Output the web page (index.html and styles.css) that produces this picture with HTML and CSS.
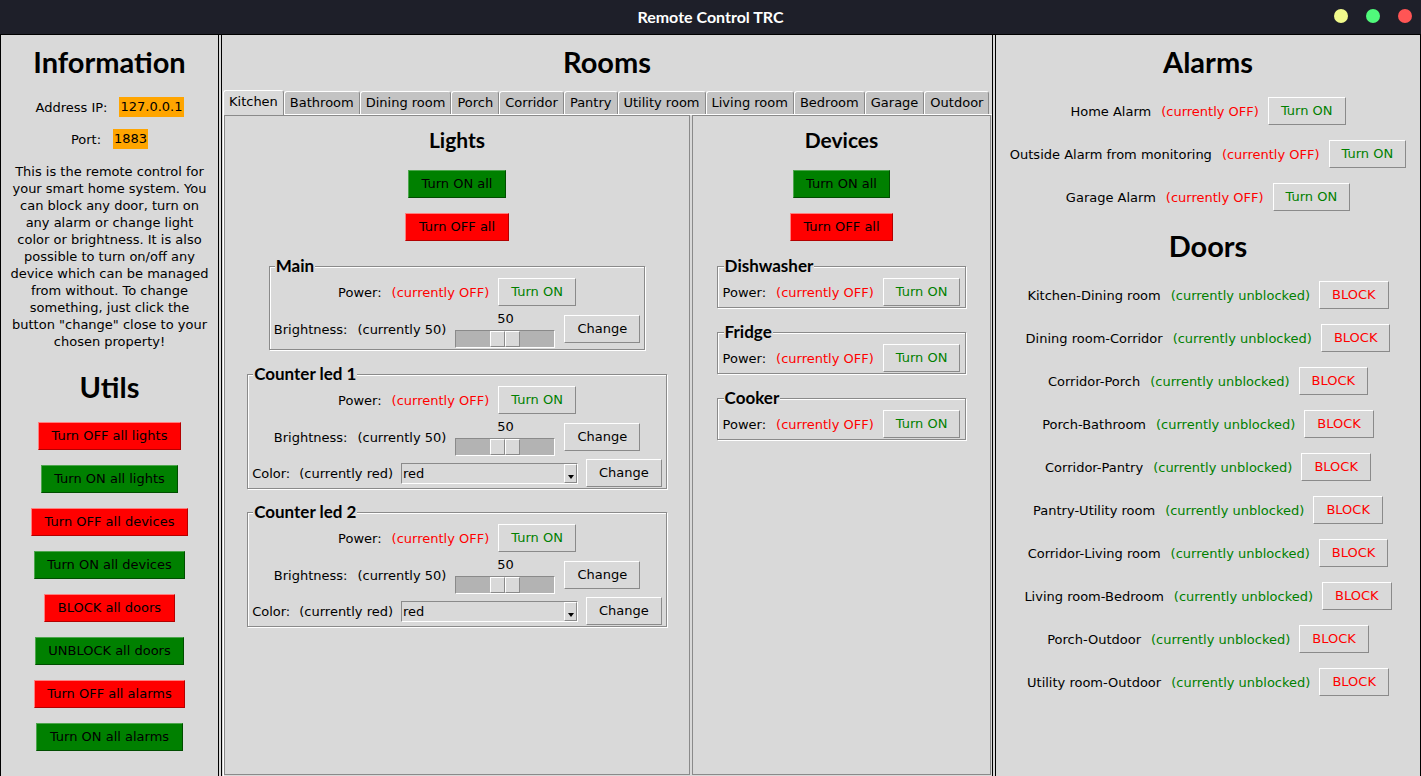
FILE: index.html
```html
<!DOCTYPE html>
<html lang="en">
<head>
<meta charset="utf-8">
<title>Remote Control TRC</title>
<link rel="stylesheet" href="styles.css">
</head>
<body>
<header class="titlebar">
  <div class="wintitle">Remote Control TRC</div>
  <div class="winbtns">
    <span class="dot dot-y"></span><span class="dot dot-g"></span><span class="dot dot-r"></span>
  </div>
</header>
<main class="app">
  <section class="panel panel-left">
    <h1 class="title">Information</h1>
    <div class="info-row"><span>Address IP:</span><span class="badge">127.0.0.1</span></div>
    <div class="info-row port-row"><span>Port:</span><span class="badge">1883</span></div>
    <p class="desc">This is the remote control for<br>your smart home system. You<br>can block any door, turn on<br>any alarm or change light<br>color or brightness. It is also<br>possible to turn on/off any<br>device which can be managed<br>from without. To change<br>something, just click the<br>button "change" close to your<br>chosen property!</p>
    <h1 class="title utils-title">Utils</h1>
    <div class="utils">
      <button class="btn btn-red">Turn OFF all lights</button>
      <button class="btn btn-green">Turn ON all lights</button>
      <button class="btn btn-red">Turn OFF all devices</button>
      <button class="btn btn-green">Turn ON all devices</button>
      <button class="btn btn-red">BLOCK all doors</button>
      <button class="btn btn-green">UNBLOCK all doors</button>
      <button class="btn btn-red">Turn OFF all alarms</button>
      <button class="btn btn-green">Turn ON all alarms</button>
    </div>
  </section>

  <section class="panel panel-mid">
    <h1 class="title">Rooms</h1>
    <div class="notebook">
      <div class="tabs">
        <div class="tab active">Kitchen</div>
        <div class="tab">Bathroom</div>
        <div class="tab">Dining room</div>
        <div class="tab">Porch</div>
        <div class="tab">Corridor</div>
        <div class="tab">Pantry</div>
        <div class="tab">Utility room</div>
        <div class="tab">Living room</div>
        <div class="tab">Bedroom</div>
        <div class="tab">Garage</div>
        <div class="tab">Outdoor</div>
      </div>
      <div class="pane">
        <div class="frame lights">
          <h2 class="subtitle">Lights</h2>
          <button class="btn btn-green first-btn">Turn ON all</button>
          <button class="btn btn-red second-btn">Turn OFF all</button>

          <div class="lf lf-first">
            <div class="lf-title">Main</div>
            <div class="row">
              <span class="lbl">Power:</span><span class="off">(currently OFF)</span>
              <button class="btn btn-gray txt-green">Turn ON</button>
            </div>
            <div class="row">
              <span class="lbl">Brightness:</span><span>(currently 50)</span>
              <div class="scale"><div class="scale-val">50</div><div class="trough"><span class="slider"></span><span class="slider"></span></div></div>
              <button class="btn btn-gray">Change</button>
            </div>
          </div>

          <div class="lf">
            <div class="lf-title">Counter led 1</div>
            <div class="row">
              <span class="lbl">Power:</span><span class="off">(currently OFF)</span>
              <button class="btn btn-gray txt-green">Turn ON</button>
            </div>
            <div class="row">
              <span class="lbl">Brightness:</span><span>(currently 50)</span>
              <div class="scale"><div class="scale-val">50</div><div class="trough"><span class="slider"></span><span class="slider"></span></div></div>
              <button class="btn btn-gray">Change</button>
            </div>
            <div class="row color-row">
              <span class="lbl">Color:</span><span>(currently red)</span>
              <div class="combo"><span class="combo-text">red</span><span class="combo-arrow"></span></div>
              <button class="btn btn-gray">Change</button>
            </div>
          </div>

          <div class="lf lf-last">
            <div class="lf-title">Counter led 2</div>
            <div class="row">
              <span class="lbl">Power:</span><span class="off">(currently OFF)</span>
              <button class="btn btn-gray txt-green">Turn ON</button>
            </div>
            <div class="row">
              <span class="lbl">Brightness:</span><span>(currently 50)</span>
              <div class="scale"><div class="scale-val">50</div><div class="trough"><span class="slider"></span><span class="slider"></span></div></div>
              <button class="btn btn-gray">Change</button>
            </div>
            <div class="row color-row">
              <span class="lbl">Color:</span><span>(currently red)</span>
              <div class="combo"><span class="combo-text">red</span><span class="combo-arrow"></span></div>
              <button class="btn btn-gray">Change</button>
            </div>
          </div>
        </div>

        <div class="frame devices">
          <h2 class="subtitle">Devices</h2>
          <button class="btn btn-green first-btn">Turn ON all</button>
          <button class="btn btn-red second-btn">Turn OFF all</button>

          <div class="lf dev lf-first">
            <div class="lf-title">Dishwasher</div>
            <div class="row">
              <span class="lbl">Power:</span><span class="off">(currently OFF)</span>
              <button class="btn btn-gray txt-green">Turn ON</button>
            </div>
          </div>
          <div class="lf dev">
            <div class="lf-title">Fridge</div>
            <div class="row">
              <span class="lbl">Power:</span><span class="off">(currently OFF)</span>
              <button class="btn btn-gray txt-green">Turn ON</button>
            </div>
          </div>
          <div class="lf dev">
            <div class="lf-title">Cooker</div>
            <div class="row">
              <span class="lbl">Power:</span><span class="off">(currently OFF)</span>
              <button class="btn btn-gray txt-green">Turn ON</button>
            </div>
          </div>
        </div>
      </div>
    </div>
  </section>

  <section class="panel panel-right">
    <h1 class="title">Alarms</h1>
    <div class="list alarms">
      <div class="row"><span class="lbl">Home Alarm</span><span class="off">(currently OFF)</span><button class="btn btn-gray txt-green">Turn ON</button></div>
      <div class="row"><span class="lbl">Outside Alarm from monitoring</span><span class="off">(currently OFF)</span><button class="btn btn-gray txt-green">Turn ON</button></div>
      <div class="row"><span class="lbl">Garage Alarm</span><span class="off">(currently OFF)</span><button class="btn btn-gray txt-green">Turn ON</button></div>
    </div>
    <h1 class="title doors-title">Doors</h1>
    <div class="list doors">
      <div class="row"><span class="lbl">Kitchen-Dining room</span><span class="on">(currently unblocked)</span><button class="btn btn-gray txt-red">BLOCK</button></div>
      <div class="row"><span class="lbl">Dining room-Corridor</span><span class="on">(currently unblocked)</span><button class="btn btn-gray txt-red">BLOCK</button></div>
      <div class="row"><span class="lbl">Corridor-Porch</span><span class="on">(currently unblocked)</span><button class="btn btn-gray txt-red">BLOCK</button></div>
      <div class="row"><span class="lbl">Porch-Bathroom</span><span class="on">(currently unblocked)</span><button class="btn btn-gray txt-red">BLOCK</button></div>
      <div class="row"><span class="lbl">Corridor-Pantry</span><span class="on">(currently unblocked)</span><button class="btn btn-gray txt-red">BLOCK</button></div>
      <div class="row"><span class="lbl">Pantry-Utility room</span><span class="on">(currently unblocked)</span><button class="btn btn-gray txt-red">BLOCK</button></div>
      <div class="row"><span class="lbl">Corridor-Living room</span><span class="on">(currently unblocked)</span><button class="btn btn-gray txt-red">BLOCK</button></div>
      <div class="row"><span class="lbl">Living room-Bedroom</span><span class="on">(currently unblocked)</span><button class="btn btn-gray txt-red">BLOCK</button></div>
      <div class="row"><span class="lbl">Porch-Outdoor</span><span class="on">(currently unblocked)</span><button class="btn btn-gray txt-red">BLOCK</button></div>
      <div class="row"><span class="lbl">Utility room-Outdoor</span><span class="on">(currently unblocked)</span><button class="btn btn-gray txt-red">BLOCK</button></div>
    </div>
  </section>
</main>
</body>
</html>
```
FILE: styles.css
```css
* { box-sizing: border-box; }
html, body { margin: 0; padding: 0; }
body {
  width: 1421px;
  height: 776px;
  overflow: hidden;
  background: #d9d9d9;
  font-family: "DejaVu Sans", sans-serif;
  font-size: 13px;
  color: #000;
}

/* window title bar */
.titlebar {
  height: 34px;
  background: #1e1f29;
  display: grid;
  grid-template-columns: 1fr auto 1fr;
  align-items: center;
}
.wintitle {
  grid-column: 2;
  color: #fff;
  font-family: "Lato", "DejaVu Sans", sans-serif;
  font-weight: 700;
  font-size: 16px;
  margin-bottom: 2px;
}
.winbtns {
  grid-column: 3;
  justify-self: end;
  display: flex;
  gap: 18px;
  padding-right: 9px;
  margin-bottom: 2px;
}
.dot { width: 14px; height: 14px; border-radius: 50%; }
.dot-y { background: #f1fa8c; }
.dot-g { background: #50fa7b; }
.dot-r { background: #ff5555; }

/* main layout */
.app {
  display: flex;
  gap: 2px;
  border-top: 1px solid #000;
  height: 742px;
}
.panel {
  border: 1px solid #000;
  border-top: 0;
  height: 760px;
  display: flex;
  flex-direction: column;
  align-items: center;
  flex: none;
}
.panel-left { width: 219px; }
.panel-mid { width: 772px; }
.panel-right { width: 426px; }

.title {
  margin: 0;
  height: 54px;
  line-height: 54px;
  font-family: "Lato", "DejaVu Sans", sans-serif;
  font-weight: 700;
  font-size: 29px;
}

/* left panel */
.info-row {
  margin-top: 8px;
  height: 20px;
  display: flex;
  align-items: center;
  gap: 12px;
}
.port-row { margin-top: 12px; }
.badge {
  background: #ffa500;
  height: 20px;
  line-height: 20px;
  padding: 0 1px;
}
.desc {
  margin: 14px 0 0;
  line-height: 17px;
  text-align: center;
  white-space: nowrap;
}
.utils-title { margin-top: 10px; }
.utils {
  margin-top: 8px;
  display: flex;
  flex-direction: column;
  align-items: center;
  gap: 15px;
}

/* buttons */
.btn {
  font-family: inherit;
  font-size: 13px;
  height: 28px;
  padding: 0 12.5px;
  border: 1px solid;
  border-radius: 0;
  line-height: 26px;
  color: #000;
  white-space: nowrap;
  flex: none;
}
.btn-red {
  background: #ff0000;
  border-color: #ff8080 #b30000 #b30000 #ff8080;
}
.btn-green {
  background: #008000;
  border-color: #4da64d #004d00 #004d00 #4da64d;
}
.btn-gray {
  background: #d9d9d9;
  padding: 0 12px;
  border-color: #ffffff #8a8a8a #8a8a8a #ffffff;
}
.txt-green { color: #008000; }
.txt-red { color: #ff0000; }
.off { color: #ff0000; }
.on { color: #008000; }

/* notebook */
.notebook {
  align-self: stretch;
  margin: 1px 0 0 1px;
}
.tabs {
  display: flex;
  height: 24px;
  align-items: flex-end;
}
.tab {
  height: 23px;
  line-height: 21px;
  padding: 0 5px;
  background: #c3c3c3;
  border: 1px solid;
  border-bottom: 0;
  border-color: #ffffff #8a8a8a transparent #ffffff;
  border-radius: 3px 3px 0 0;
  white-space: nowrap;
}
.tab.active {
  height: 25px;
  background: #d9d9d9;
  margin-bottom: -1px;
  position: relative;
  z-index: 1;
}
.pane {
  display: flex;
  height: 662px;
  border-top: 1px solid #fff;
  border-left: 1px solid #fff;
}
.frame {
  height: 660px;
  border: 1px solid #8a8a8a;
  display: flex;
  flex-direction: column;
  align-items: center;
}
.lights { width: 466px; }
.devices { width: 299px; margin-left: 2px; }
.subtitle {
  margin: 0;
  height: 48px;
  line-height: 48px;
  font-family: "Lato", "DejaVu Sans", sans-serif;
  font-weight: 700;
  font-size: 21px;
}
.first-btn { margin-top: 6px; }
.second-btn { margin-top: 15px; }

/* label frames */
.lf {
  margin-top: 24px;
  border: 1px solid #8a8a8a;
  box-shadow: inset 1px 1px 0 #fff, 1px 1px 0 #fff;
  padding: 0 4px 1px;
  display: flex;
  flex-direction: column;
  align-items: center;
}
.lf-first { margin-top: 25px; }
.lf-last { margin-top: 23px; }
.lf.dev { padding: 0 5px 1px; }
.lf-title {
  align-self: flex-start;
  margin: -10px 0 0 1px;
  padding: 0 1px;
  height: 17px;
  line-height: 17px;
  background: #d9d9d9;
  font-family: "Lato", "DejaVu Sans", sans-serif;
  font-weight: 700;
  font-size: 17px;
}
.row {
  display: flex;
  align-items: center;
  gap: 9px;
  margin-top: 4px;
  white-space: nowrap;
}
.color-row { margin-top: 3px; gap: 8px; }
.lbl { margin-right: 1px; }

/* scale */
.scale {
  width: 100px;
  display: flex;
  flex-direction: column;
  align-items: center;
}
.scale-val { height: 20px; line-height: 18px; }
.trough {
  width: 100px;
  height: 18px;
  background: #b3b3b3;
  border: 1px solid;
  border-color: #8a8a8a #fff #fff #8a8a8a;
  display: flex;
  justify-content: center;
}
.slider {
  width: 15px;
  height: 16px;
  background: #d9d9d9;
  border: 1px solid;
  border-color: #fff #8a8a8a #8a8a8a #fff;
}

/* combobox */
.combo {
  width: 177px;
  height: 21px;
  border: 1px solid;
  border-color: #8a8a8a #fff #fff #8a8a8a;
  display: flex;
  align-items: center;
  padding-left: 1px;
}
.combo-text { flex: 1; }
.combo-arrow {
  width: 13px;
  height: 19px;
  border: 1px solid;
  border-color: #fff #8a8a8a #8a8a8a #fff;
  display: flex;
  align-items: flex-end;
  justify-content: center;
  padding-bottom: 3px;
}
.combo-arrow::before {
  content: "";
  border-left: 3px solid transparent;
  border-right: 3px solid transparent;
  border-top: 4px solid #000;
}

/* right panel */
.list {
  margin-top: 8px;
  display: flex;
  flex-direction: column;
  align-items: center;
  gap: 15px;
}
.list .row { margin-top: 0; gap: 9px; }
.doors-title { margin-top: 8px; }
```
